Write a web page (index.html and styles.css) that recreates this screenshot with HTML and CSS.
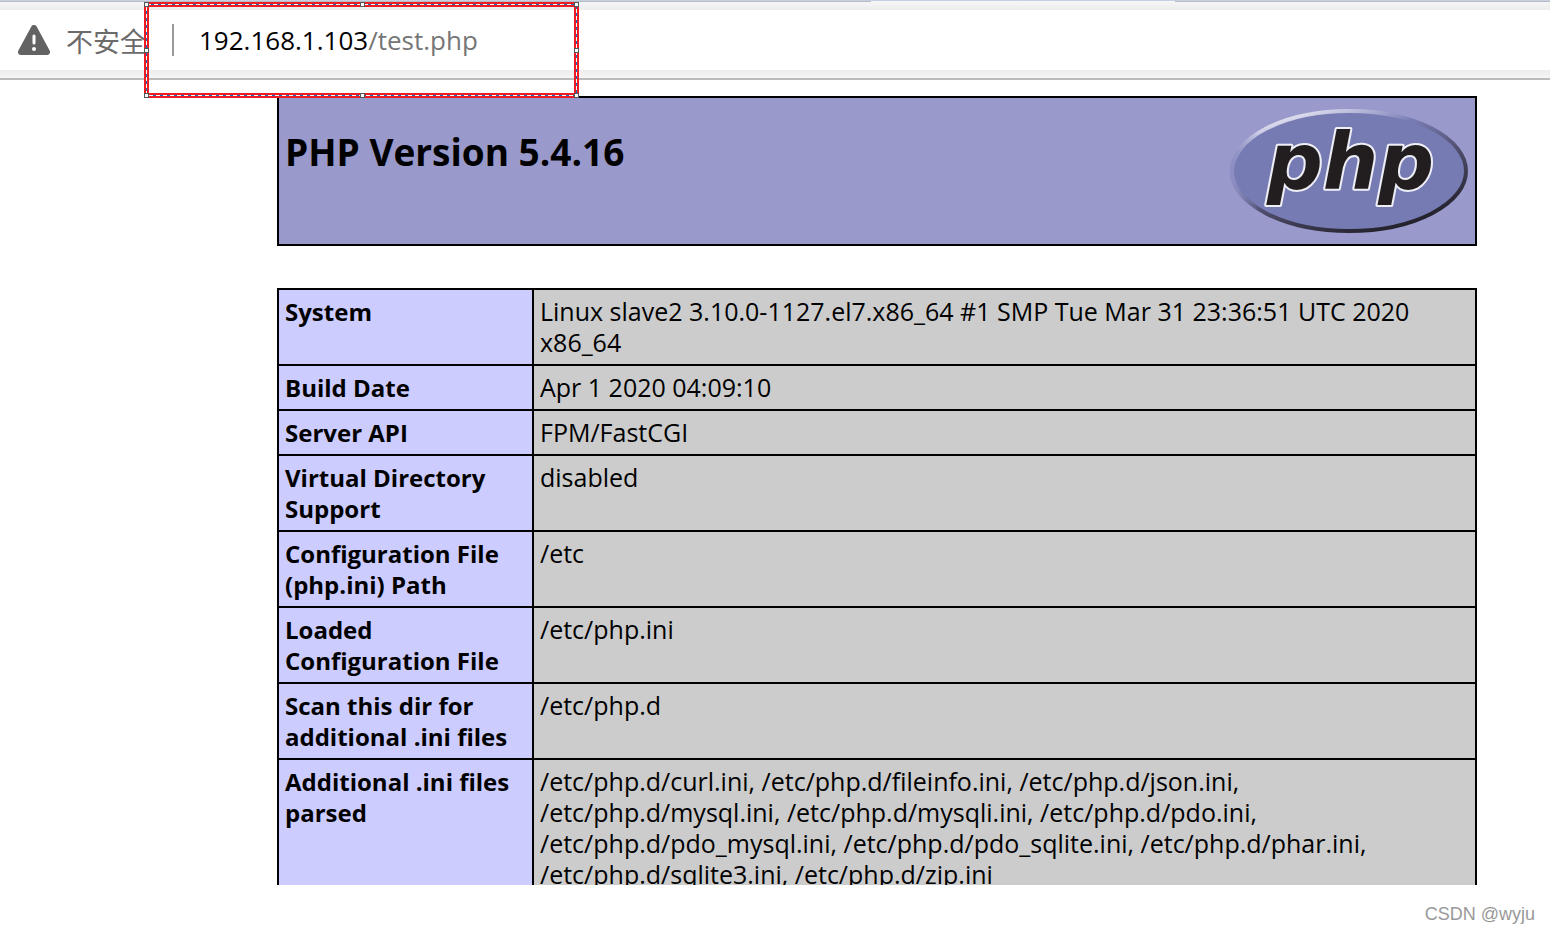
FILE: index.html
```
<!DOCTYPE html>
<html lang="en">
<head>
    <meta charset="UTF-8">
    <meta name="viewport" content="width=device-width, initial-scale=1.0">
    <title>phpinfo()</title>
    <link rel="stylesheet" href="styles.css">
</head>
<body>
    <header class="browser">
        <div class="tab-strip">
            <span class="tab-edge left"></span>
            <span class="tab-edge"></span>
        </div>
        <div class="address-bar">
            <button class="security" type="button">
                <svg class="warning" viewBox="0 0 32 30" width="32" height="30" aria-hidden="true">
                    <path d="M16 3 L29 27 H3 Z" fill="#636363" stroke="#636363" stroke-width="6" stroke-linejoin="round"/>
                    <path d="M16 11 V18" stroke="#fff" stroke-width="3" stroke-linecap="round"/>
                    <circle cx="16" cy="24" r="2" fill="#fff"/>
                </svg>
                <span lang="zh-CN">不安全</span>
            </button>
            <span class="divider"></span>
            <a class="url" href="#">192.168.1.103<span class="path">/test.php</span></a>
        </div>
    </header>

    <!-- annotation frame round the address -->
    <svg class="marker" width="435" height="96" aria-hidden="true">
        <rect class="frame" x="2.5" y="2.5" width="430" height="91"/>
        <rect class="frame-inner" x="2.5" y="2.5" width="430" height="91"/>
        <rect class="frame-dash" x="2.5" y="2.5" width="430" height="91"/>
        <g class="handles">
            <rect x="0.5" y="0.5" width="4" height="4"/>
            <rect x="216.5" y="0.5" width="4" height="4"/>
            <rect x="430.5" y="0.5" width="4" height="4"/>
            <rect x="0.5" y="46.5" width="4" height="4"/>
            <rect x="430.5" y="46.5" width="4" height="4"/>
            <rect x="0.5" y="91.5" width="4" height="4"/>
            <rect x="216.5" y="91.5" width="4" height="4"/>
            <rect x="430.5" y="91.5" width="4" height="4"/>
        </g>
    </svg>

    <main class="content">
        <div class="title-box">
            <h1>PHP Version 5.4.16</h1>
            <svg class="logo" viewBox="0 0 240 126" width="240" height="126" role="img" aria-label="PHP logo">
                <defs>
                    <linearGradient id="rim" x1="0.2" y1="0" x2="0.8" y2="1">
                        <stop offset="0" stop-color="#f4f4fb"/>
                        <stop offset="0.3" stop-color="#7a7eb6"/>
                        <stop offset="0.6" stop-color="#4c4a68"/>
                        <stop offset="1" stop-color="#1c1a20"/>
                    </linearGradient>
                    <linearGradient id="rim-fade" x1="0" y1="0" x2="1" y2="0">
                        <stop offset="0" stop-color="#8d8fc4"/>
                        <stop offset="0.12" stop-color="#8d8fc4" stop-opacity="0"/>
                    </linearGradient>
                </defs>
                <ellipse cx="120" cy="63" rx="117" ry="60" fill="#777bb3" stroke="url(#rim)" stroke-width="4"/>
                <ellipse cx="120" cy="63" rx="117" ry="60" fill="none" stroke="url(#rim-fade)" stroke-width="4"/>
                <text x="38" y="81">php</text>
            </svg>
        </div>

        <table>
            <tr><th scope="row">System</th><td>Linux slave2 3.10.0-1127.el7.x86_64 #1 SMP Tue Mar 31 23:36:51 UTC 2020<br>x86_64</td></tr>
            <tr><th scope="row">Build Date</th><td>Apr 1 2020 04:09:10</td></tr>
            <tr><th scope="row">Server API</th><td>FPM/FastCGI</td></tr>
            <tr><th scope="row">Virtual Directory<br>Support</th><td>disabled</td></tr>
            <tr><th scope="row">Configuration File<br>(php.ini) Path</th><td>/etc</td></tr>
            <tr><th scope="row">Loaded<br>Configuration File</th><td>/etc/php.ini</td></tr>
            <tr><th scope="row">Scan this dir for<br>additional .ini files</th><td>/etc/php.d</td></tr>
            <tr>
                <th scope="row">Additional .ini files<br>parsed</th>
                <td>
                    /etc/php.d/curl.ini, /etc/php.d/fileinfo.ini, /etc/php.d/json.ini,<br>
                    /etc/php.d/mysql.ini, /etc/php.d/mysqli.ini, /etc/php.d/pdo.ini,<br>
                    /etc/php.d/pdo_mysql.ini, /etc/php.d/pdo_sqlite.ini, /etc/php.d/phar.ini,<br>
                    /etc/php.d/sqlite3.ini, /etc/php.d/zip.ini
                </td>
            </tr>
        </table>
    </main>

    <footer>CSDN @wyju</footer>
</body>
</html>
```
FILE: styles.css
```
* {
    box-sizing: border-box;
}

body {
    display: flex;
    flex-direction: column;
    height: 100vh;
    margin: 0;
    background-color: #fff;
    color: #000;
    font-family: "Open Sans", "Noto Sans CJK SC", sans-serif;
    font-size: 24px;
    line-height: 31px;
}

/* browser bar */
.browser {
    flex: none;
    border-bottom: 2px solid #bbb;
    background: linear-gradient(#f8f8f8, #ececec 10px, #ececec 70px, #f6f6f6);
}

.tab-strip {
    display: flex;
    justify-content: space-between;
    height: 10px;
    border-top: 1px solid #c8cfe2;
}

.tab-edge {
    width: 375px;
    height: 1px;
    background-color: #b9bbc2;
}

.tab-edge.left {
    width: 871px;
}

.address-bar {
    display: flex;
    align-items: center;
    height: 60px;
    margin-bottom: 8px;
    padding-left: 18px;
    background-color: #fff;
    font-size: 26px;
}

.security {
    display: flex;
    align-items: center;
    gap: 16px;
    padding: 0;
    border: none;
    background: none;
    color: #6b6b6b;
    font-family: "Noto Sans CJK SC", sans-serif;
    font-size: 27px;
    font-weight: 400;
    line-height: 31px;
}

.divider {
    width: 2px;
    height: 32px;
    margin: 0 25px;
    background-color: #999;
}

.url {
    color: #000;
    text-decoration: none;
}

.path {
    color: #767676;
}

/* red frame */
.marker {
    position: absolute;
    top: 2px;
    left: 144px;
}

.marker rect {
    fill: none;
    shape-rendering: crispEdges;
}

.marker .frame {
    stroke: #ed1c24;
    stroke-width: 5;
}

.marker .frame-inner {
    stroke: #0f6fc6;
    stroke-width: 1;
}

.marker .frame-dash {
    stroke: #fff;
    stroke-width: 1;
    stroke-dasharray: 4 3;
}

.marker .handles rect {
    fill: #fff;
    stroke: #555;
}

/* phpinfo page */
.content {
    flex: 1;
    min-height: 0;
    overflow: hidden;
    padding: 16px 73px 0 277px;
}

.title-box {
    display: flex;
    justify-content: space-between;
    align-items: flex-start;
    height: 150px;
    margin-bottom: 42px;
    padding: 10px 6px;
    border: 2px solid #000;
    background-color: #9999cc;
}

h1 {
    margin: 20px 0 0;
    font-size: 37px;
    line-height: 48px;
}

.logo text {
    fill: #221e1f;
    stroke: #eeeef6;
    stroke-width: 4px;
    stroke-linejoin: round;
    paint-order: stroke;
    font: italic bold 78px "DejaVu Sans", sans-serif;
}

table {
    width: 100%;
    border-collapse: collapse;
    table-layout: fixed;
}

th,
td {
    padding: 6px;
    border: 2px solid #000;
    vertical-align: top;
    text-align: left;
}

th {
    width: 255px;
    background-color: #ccccff;
    white-space: nowrap;
}

td {
    background-color: #cccccc;
    font-size: 25px;
}

footer {
    flex: none;
    height: 49px;
    padding: 14px 15px 0 0;
    color: #999;
    font-family: "Liberation Sans", sans-serif;
    font-size: 18px;
    text-align: right;
}
```
